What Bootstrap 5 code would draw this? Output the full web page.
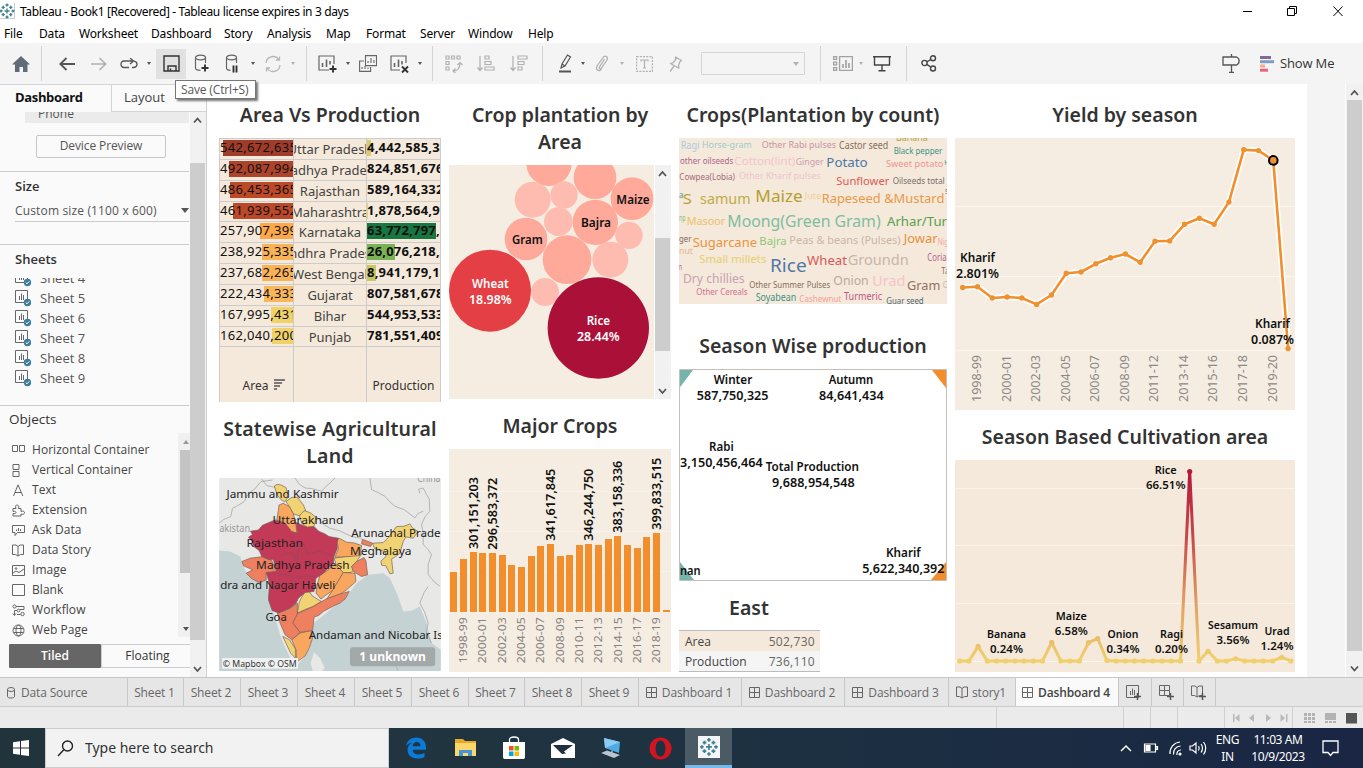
<!DOCTYPE html>
<html lang="en">
<head>
<meta charset="utf-8">
<title>Tableau - Book1</title>
<link href="https://cdn.jsdelivr.net/npm/bootstrap@5.3.0/dist/css/bootstrap.min.css" rel="stylesheet">
<style>
body{width:1363px;height:768px;overflow:hidden;background:#fff;font-family:"Open Sans","Noto Sans",sans-serif;font-size:12px;line-height:20px;color:#333}
svg{display:block;flex:none}
.ui{font-family:"Noto Sans","Open Sans",sans-serif}
.titlebar{height:22px;color:#000;font-size:12px;letter-spacing:-.36px}
.titlebar .name{margin-left:5px;padding-top:2px}
.menubar{height:21px;color:#000;line-height:24px;font-size:12px;letter-spacing:-.18px;padding-left:4px}
.menubar span{white-space:nowrap}
.toolbar{height:41px;background:#f4f4f4;position:relative}
.toolbar .slot{height:30px;display:flex;align-items:center;justify-content:center;flex:none}
.toolbar .line{width:1px;height:35px;background:#d4d4d4;flex:none}
.off{opacity:.42}
.cr{width:0;height:0;border:3px solid transparent;border-top:4px solid #555;border-bottom:0}
.toolbar .cr{border-width:3px 2.5px 0}
.combo{width:104px;height:23px;border:1px solid #d4d4d4;border-radius:1px;margin:0 15px 0 12px;padding-right:5px}
.tip{position:absolute;left:175px;top:37px;width:81px;height:19px;border:1px solid #767676;background:#fff;box-shadow:2px 2px 2px #777;font-size:12px;line-height:18px;padding-left:5px;color:#575757;white-space:nowrap;z-index:5;letter-spacing:-.15px}
.stage{height:593px}
.side{width:207px;background:#fafafa;border-top:1px solid #d4d4d4;border-right:1px solid #d0d0d0}
.side .tabs{height:27px;font-size:13px}
.side .t1{width:112px;border-right:1px solid #d4d4d4;padding-left:15px;font-weight:700;line-height:25px;color:#111;letter-spacing:-.35px}
.side .t2{flex:1;border-bottom:1px solid #d4d4d4;padding-left:12px;line-height:25px;color:#444}
.pane{width:190px;height:565px;overflow:hidden}
.phone{height:11px;margin-left:25px;background:#ebebeb;overflow:hidden;padding-left:13px;line-height:4px;color:#555;width:164px}
.preview{width:130px;height:23px;margin:12px 0 0 36px;border:1px solid #c6c6c6;border-radius:2px;text-align:center;line-height:20px;color:#555;letter-spacing:-.1px}
.rule{height:1px;background:#ccc;width:189px}
.head{font-weight:600;font-size:13px;color:#333}
.sized{margin:4px 0 0 15px;width:174px;height:22px;border-bottom:1px solid #ccc;color:#555;line-height:21px;letter-spacing:.15px}
.sheets{height:118px;margin-top:9px;padding-left:15px;overflow:hidden;color:#555;font-size:13px}
.sheets>div{height:20px;gap:9px}
.sheets>div:first-child{margin-top:-10px}
.objs{height:204px;margin-top:4px}
.objs .names{padding-left:12px;padding-top:7px;color:#444;font-size:12px;letter-spacing:.05px}
.objs .names>div{height:20px;gap:7px;white-space:nowrap}
.mini{width:12px;background:#f0f0f0;padding:7px 0 6px 2px}
.mini i{display:block;width:12px;height:123px;background:#c4c4c4}
.mode{margin:7px 0 0 9px;height:24px;line-height:22px;font-size:12px}
.mode .a{width:93px;background:#666;color:#fff;font-weight:600;text-align:center;line-height:24px;border-radius:1px}
.mode .b{width:90px;border:1px solid #ccc;border-right:0;text-align:center;padding-left:3px}
.vs{width:16px;background:#f1f1f1}
.vs .thumb{background:#cdcdcd}
.board{width:1100px;padding:17px 0 0 12px;gap:8px;overflow:hidden}
.board h2{margin:0;font-size:19.5px;line-height:27px;font-weight:600;text-align:center;color:#333;font-family:"Noto Sans","Open Sans",sans-serif;white-space:nowrap}
.c1,.c2{width:222px}.c3{width:268px}.c4{width:340px}
.grid3{height:264px;background:#f4e9da;border:1px solid #ccc;border-bottom:0;display:grid;grid-template-columns:74px 73px 73px;grid-template-rows:repeat(10,20.85px) 1fr}
.grid3>div{border-bottom:1px solid #ccc;border-right:1px solid #ccc;position:relative;overflow:hidden;white-space:nowrap;font-size:13px;font-family:"Noto Sans",sans-serif;line-height:19px}
.grid3>div:nth-child(n+31){border-bottom:0}
.grid3>div:nth-child(3n){border-right:0}
.grid3 b,.grid3 u{position:absolute;left:0;top:-1px;text-decoration:none;color:#111;letter-spacing:.3px}
.grid3 b{letter-spacing:.2px}
.grid3 i{position:absolute;top:1px;height:16px}
.grid3 i.r{right:0}.grid3 i.l{left:0}
.grid3 .mid{display:flex;justify-content:center;color:#444;line-height:20px}
.foot{display:flex;align-items:flex-end;justify-content:center;padding-bottom:7px;font-size:12px!important}
.east{width:141px;margin-top:9px;border-top:1px solid #bbb;border-bottom:1px solid #bbb;color:#444;font-size:12px}
.east div{height:20px;padding:0 5px 0 6px;line-height:21px}
.east span:last-child{color:#666;letter-spacing:.3px}
.east .e1{background:#f4e9da}.east .e2{background:#f5f5f5}
.gut{width:38px;background:#f4f4f4}
.sheetbar{height:30px;background:#e6e6e6;border-top:1px solid #c6c6c6;border-bottom:1px solid #ccc;display:grid;grid-template-columns:128px 56px 57px 57px 57px 57px 57px 56px 57px 57px 103px 103px 104px 67px 103px 33px 32px 32px 1fr;color:#666;font-size:12px}
.sheetbar>div{border-right:1px solid #c8c8c8;display:flex;align-items:center;justify-content:center;gap:4px;white-space:nowrap;letter-spacing:-.15px;padding:1px 2px 0 0}
.sheetbar .on{background:#fafafa;color:#444;font-weight:600}
.status{height:21px;background:#ebebeb;display:grid;grid-template-columns:997px 127px 27px 27px 47px 68px 1fr}
.status>div{border-right:1px solid #d0d0d0;display:flex;align-items:center}
.task{height:40px;background:linear-gradient(90deg,#21343c 0,#20353f 30%,#1c2f42 65%,#1a2644 100%);color:#fff}
.task .cell{display:flex;align-items:center;justify-content:center;height:40px;flex:none}
.find{width:344px;background:#f2f2f2;color:#333;font-size:14px;padding-left:11px;gap:11px;border:1px solid #ccc;letter-spacing:-.02px}
.app{width:49px}
.task .cur{background:#4b5b66;width:47px;border-bottom:3px solid #76b9ed}
.clock{font-size:12px;line-height:17px;text-align:center;white-space:nowrap;letter-spacing:-.4px}
.chart text{font-family:"Noto Sans","Open Sans",sans-serif}
</style>
</head>
<body class="d-flex flex-column">
<svg width="0" height="0" class="position-absolute">
<defs>
<g id="sheet" fill="none" stroke="#666"><path d="M.5.500h12v12H.5zM4.500 10V6M6.500 10V3.500M8.500 10V5"/></g>
<g id="sheetok"><use href="#sheet"/><circle cx="12.500" cy="12.500" r="3.700" fill="#3c7d9d"/><path d="M10.700 12.500l1.300 1.300 2.300-2.500" stroke="#fff" fill="none"/></g>
<g id="dash" fill="none" stroke="#666"><path d="M.5.500h10v10H.5zM5.500.500v10M.5 5.500h10"/></g>
<g id="book" fill="none" stroke="#666"><path d="M.5 1h3.500l2 1.500L8 1h3.500v9.500H8.500L6 12l-2.500-1.500H.5zM6 2.500V12"/></g>
<g id="logo" stroke="#3f8193" stroke-width="1.400"><path d="M8 5.500v5M5.500 8h5M8 .5v3M6.500 2h3M8 12.500v3M6.500 14h3M.5 8h3M2 6.500v3M12.500 8h3M14 6.500v3M4.200 2.800v3.200M2.600 4.400h3.200M11.800 2.800v3.200M10.200 4.400h3.200M4.200 10v3.200M2.600 11.600h3.200M11.800 10v3.200M10.200 11.600h3.200"/></g>
</defs>
</svg>

<header class="titlebar ui d-flex align-items-center">
  <svg width="15" height="16" viewBox="1 0 15 16"><path d="M15.500 0v15.500H0" fill="none" stroke="#ccc"/><use href="#logo"/></svg>
  <span class="name">Tableau - Book1 [Recovered] - Tableau license expires in 3 days</span>
  <svg class="ms-auto" width="120" height="20" viewBox="1243 1 120 20" fill="none" stroke="#000"><path d="M1242 11.500h10M1287.500 8.500h7v7h-7zM1289.500 8.500v-2h7v7h-2M1333.500 6.500l9 9.500M1342.500 6.500l-9 9.500"/></svg>
</header>
<nav class="menubar ui d-flex" id="menu"></nav>

<div class="toolbar d-flex align-items-center">
  <div class="slot" style="width:41px"><svg width="18" height="16"><path d="M9 0l9 8.500h-2.500V16H11v-5H7.500v5H3V8.500H0z" fill="#5f6c78"/></svg></div>
  <div class="line"></div>
  <div class="slot" style="width:32px;margin-left:9px"><svg width="16" height="14" fill="none" stroke="#555" stroke-width="1.800"><path d="M16 7H1M7.500 1L1.300 7l6.200 6"/></svg></div>
  <div class="slot off" style="width:32px"><svg width="16" height="14" fill="none" stroke="#555" stroke-width="1.600"><path d="M0 7h15M8.500 1l6.200 6-6.200 6"/></svg></div>
  <div class="slot" style="width:28px"><svg width="18" height="12" fill="none" stroke="#555" stroke-width="1.300"><path d="M9 9.500H4C0 9.500 0 3 4 3h9M10 0l3.500 3L10 6M14 3.200c4 .5 4 5.800 0 6.300h-2"/></svg></div>
  <div class="slot" style="width:12px"><i class="cr"></i></div>
  <div class="slot" style="width:30px;margin-left:1px;background:#e1e1e1"><svg width="17" height="17" fill="none" stroke="#333" stroke-width="1.400"><path d="M1 1h15v15H1zM5 16v-5h8v5M7.500 16v-2.500"/></svg></div>
  <div class="slot" style="width:32px"><svg width="16" height="19" fill="none" stroke="#666" stroke-width="1.200"><ellipse cx="6.500" cy="3.500" rx="5" ry="2.300"/><path d="M1.500 3.500V14c0 1.500 2 2.300 5 2.300M11.500 3.500V9"/><path d="M11 10.500v7M7.500 14h7" stroke="#333" stroke-width="1.900"/></svg></div>
  <div class="slot" style="width:28px"><svg width="14" height="19" fill="none" stroke="#666" stroke-width="1.200"><ellipse cx="6.500" cy="3.500" rx="5" ry="2.300"/><path d="M1.500 3.500V14c0 1.500 2 2.300 4 2.300M11.500 3.500V9"/><path d="M8.500 11.500v7M11.500 11.500v7" stroke="#333" stroke-width="1.900"/></svg></div>
  <div class="slot" style="width:14px"><i class="cr"></i></div>
  <div class="slot off" style="width:26px"><svg width="18" height="18" fill="none" stroke="#666" stroke-width="1.300"><path d="M2 8a7 7 0 0 1 13-3M16 10a7 7 0 0 1-13 3M15.500 1.500V5H12M2.500 16.500V13H6"/></svg></div>
  <div class="slot off" style="width:14px"><i class="cr"></i></div>
  <div class="line" style="margin:0 4px 0 6px"></div>
  <div class="slot" style="width:32px"><svg width="19" height="18" fill="none" stroke="#666" stroke-width="1.200"><path d="M16 9V1H1v14h10"/><path d="M4.500 12V8M8.500 12V4.500M12 9.500V6" stroke-width="1.600"/><path d="M15 10.500v7M11.500 14h7" stroke="#333" stroke-width="1.900"/></svg></div>
  <div class="slot" style="width:10px"><i class="cr"></i></div>
  <div class="slot" style="width:30px"><svg width="18" height="17" fill="none" stroke="#666" stroke-width="1.100"><path d="M6.500.600h11v10h-11zM5 6H.600v10.400h11V12M9 8V6M12 8V3M15 8V5M3 14v-2M6 14v-3M9 14v-1.500"/></svg></div>
  <div class="slot" style="width:32px"><svg width="19" height="18" fill="none" stroke="#666" stroke-width="1.200"><path d="M16 8V1H1v14h9"/><path d="M4.500 12V8M8.500 12V4.500M12 9.500V6" stroke-width="1.600"/><path d="M12 11.500l6 6M18 11.500l-6 6" stroke="#333" stroke-width="1.900"/></svg></div>
  <div class="slot" style="width:10px"><i class="cr"></i></div>
  <div class="line" style="margin:0 6px 0 7px"></div>
  <div class="slot off" style="width:30px"><svg width="18" height="18" fill="none" stroke="#555" stroke-width="1.200"><path d="M1 1h3v3H1zM6.500 1h3v3h-3zM12 1h3v3h-3zM1 6.500h3v3H1zM1 12h3v3H1zM8 16c5 0 7-3 7-8M12.500 10L15 7.500 17.500 10M10.500 13.500L8 16l2.500 2"/></svg></div>
  <div class="slot off" style="width:34px"><svg width="18" height="17" fill="none" stroke="#555" stroke-width="1.200"><path d="M3 1v14M.5 12.500L3 15.500l2.500-3M8 1h4v3H8zM8 6.500h6v3H8zM8 12h9v3H8z"/></svg></div>
  <div class="slot off" style="width:32px"><svg width="18" height="17" fill="none" stroke="#555" stroke-width="1.200"><path d="M3 1v14M.5 12.500L3 15.500l2.500-3M8 1h9v3H8zM8 6.500h6v3H8zM8 12h4v3H8z"/></svg></div>
  <div class="line" style="margin:0 8px 0 7px"></div>
  <div class="slot" style="width:28px"><svg width="14" height="19" fill="none" stroke="#555" stroke-width="1.200"><path d="M3 14l1-4L9.500 1l3 2L7 12zM4 10l3 2"/><path d="M1 17.500h12" stroke-width="2"/></svg></div>
  <div class="slot" style="width:8px"><i class="cr"></i></div>
  <div class="slot off" style="width:30px"><svg width="14" height="17" fill="none" stroke="#555" stroke-width="1.300"><path d="M9.500 4L4.500 12c-.7 1.500 1 2.500 2 1L12 5c1.500-3-2-5.500-4-2.500L2 11c-2 4 2.500 6 4.500 3"/></svg></div>
  <div class="slot off" style="width:10px"><i class="cr"></i></div>
  <div class="slot off" style="width:34px"><svg width="17" height="16" fill="none" stroke="#555" stroke-width="1.200"><path d="M.6.600h15.800v14.800H.600z" stroke-dasharray="2 1.200"/><path d="M5 5.500V4h7v1.500M8.500 4v8M7 12h3"/></svg></div>
  <div class="slot off" style="width:28px"><svg width="15" height="16" fill="none" stroke="#555" stroke-width="1.300" stroke-linejoin="round"><path d="M7.500 1l6 3.500-1.700 1.200-1.300 3.800.3 2.700L2.500 7.500l2.700-.8 2.500-3.200zM6 10l-4 5.500"/></svg></div>
  <div class="combo d-flex align-items-center justify-content-end"><i class="cr off" style="border-width:4px 3.500px 0"></i></div>
  <div class="line" style="margin-right:7px"></div>
  <div class="slot off" style="width:30px"><svg width="20" height="15" fill="none" stroke="#333" stroke-width="1.300"><path d="M6.600.700h12.800v13.600H6.600zM.6.700h3v2.600h-3zM.6 6.200h3v2.600h-3zM.6 11.700h3v2.600h-3z"/><path d="M10 12V8M13 12V4M16 12V7" stroke-width="1.700"/></svg></div>
  <div class="slot off" style="width:6px"><i class="cr"></i></div>
  <div class="slot" style="width:36px"><svg width="18" height="17" fill="none" stroke="#444" stroke-width="1.400"><path d="M0 1.700h18M1.500 2v8h15V2M9 10v5.500M5.500 15.800h7"/></svg></div>
  <div class="line" style="margin:0 7px 0 6px"></div>
  <div class="slot" style="width:30px"><svg width="16" height="17" fill="none" stroke="#444" stroke-width="1.400"><circle cx="3.500" cy="8" r="2.600"/><circle cx="12" cy="3.200" r="2.500"/><circle cx="12" cy="13.500" r="2.500"/><path d="M5.800 6.800l4-2.300M5.800 9.300l4 2.700"/></svg></div>
  <svg class="ms-auto" width="19" height="19" fill="none" stroke="#555" stroke-width="1.300"><path d="M1 3h13.500c3.500 1.500 3.500 6.500 0 8H1zM9.500 0v3M9.500 11v7M7 18.300h5"/></svg>
  <svg width="14" height="16" style="margin:0 6px 0 19px"><path d="M0 0h11v3H0z" fill="#85679a"/><path d="M0 4.200h14v3H0z" fill="#7d9cc4"/><path d="M0 8.500h5v3H0z" fill="#f3ab8b"/><path d="M0 12.700h8v3H0z" fill="#e8647c"/></svg>
  <span style="width:83px;font-size:13px;letter-spacing:-.15px;margin-top:-1px">Show Me</span>
  <div class="tip">Save (Ctrl+S)</div>
</div>

<main class="stage d-flex">
  <aside class="side">
    <div class="tabs d-flex"><div class="t1">Dashboard</div><div class="t2">Layout</div></div>
    <div class="d-flex">
      <div class="pane">
        <div class="phone">Phone</div>
        <div class="preview">Device Preview</div>
        <div class="rule" style="margin-top:13px"></div>
        <div class="head" style="margin:4px 0 0 15px">Size</div>
        <div class="sized d-flex align-items-center justify-content-between"><span>Custom size (1100 x 600)</span><i class="cr" style="border-width:5px 4px 0"></i></div>
        <div class="rule" style="margin-top:22px"></div>
        <div class="head" style="margin:4px 0 0 15px">Sheets</div>
        <div class="sheets" id="sheets"></div>
        <div class="rule" style="margin-top:9px"></div>
        <div style="margin:3px 0 0 9px;font-size:13.500px;">Objects</div>
        <div class="objs d-flex justify-content-between">
          <div class="names">
            <div class="d-flex align-items-center"><svg width="13" height="13" fill="none" stroke="#666"><path d="M.5 1.500h5v6h-5zM7.500 1.500h5v6h-5z"/></svg>Horizontal Container</div>
            <div class="d-flex align-items-center"><svg width="13" height="13" fill="none" stroke="#666"><path d="M1 .5h6v5H1zM1 7.500h6v5H1z"/></svg>Vertical Container</div>
            <div class="d-flex align-items-center"><svg width="13" height="13" fill="none" stroke="#666"><path d="M1.500 12L6 .8 10.800 12M3 8.500h6.300"/></svg>Text</div>
            <div class="d-flex align-items-center"><svg width="13" height="13" fill="none" stroke="#666"><path d="M1 4.500h3C3 2 4 1 5 1s2.500 1 1.500 3.500H9v3c2-1 3.500 0 3.500 1.200S11 11 9 10v2H1V9.500c2 .5 3-.2 3-1s-1-1.700-3-1z"/></svg>Extension</div>
            <div class="d-flex align-items-center"><svg width="13" height="13" fill="none" stroke="#666"><path d="M.5 1.500h12v7h-7L3 11.500v-3H.5zM4.500 7V5.500M6.500 7V4M8.500 7V5"/></svg>Ask Data</div>
            <div class="d-flex align-items-center"><svg width="13" height="13"><use href="#book"/></svg>Data Story</div>
            <div class="d-flex align-items-center"><svg width="13" height="13" fill="none" stroke="#666"><path d="M.5 1.500h12v10H.5zM1 9l3-2 3 1.500L12 5"/><circle cx="4" cy="4.500" r=".8"/></svg>Image</div>
            <div class="d-flex align-items-center"><svg width="13" height="13" fill="none" stroke="#666"><path d="M.5.500h12v11H.5z"/></svg>Blank</div>
            <div class="d-flex align-items-center"><svg width="13" height="13" fill="none" stroke="#666"><circle cx="2.500" cy="2.500" r="1.600"/><circle cx="10.500" cy="10" r="1.700"/><circle cx="6.500" cy="6.500" r="1.400"/><path d="M4 2.500h8v3H8M5 6.500H2.500V11M1 9.500l1.500 2L4 9.500M5 10.500h3.500"/></svg>Workflow</div>
            <div class="d-flex align-items-center"><svg width="13" height="13" fill="none" stroke="#666"><circle cx="6.500" cy="6.500" r="5.500"/><ellipse cx="6.500" cy="6.500" rx="2.500" ry="5.500"/><path d="M1.500 4.500h10M1.500 8.500h10"/></svg>Web Page</div>
          </div>
          <div class="mini d-flex flex-column justify-content-between"><div><span class="cr d-block" style="border-width:0 3px 4px;border-bottom:4px solid #999;margin-left:3px"></span><i style="margin-top:6px"></i></div><span class="cr" style="margin-left:3px;border-width:4px 3px 0"></span></div>
        </div>
        <div class="mode d-flex"><div class="a">Tiled</div><div class="b">Floating</div></div>
      </div>
      <div class="vs"><svg width="16" height="51" fill="none" stroke="#555" stroke-width="1.800"><path d="M4 10.500l3.500-4 3.500 4"/></svg><div class="thumb" style="height:477px;width:15px"></div><svg width="16" height="38" fill="none" stroke="#555" stroke-width="1.800"><path d="M4 27l3.500 4 3.500-4"/></svg></div>
    </div>
  </aside>

  <section class="board d-flex">
    <div class="c1">
      <h2 style="margin-bottom:10px">Area Vs Production</h2>
      <div class="grid3" id="states"></div>
      <h2 style="margin:13px -4px 9px;letter-spacing:.2px">Statewise Agricultural<br>Land</h2>
      <svg class="chart" width="222" height="193" viewBox="27 204 666 580">
        <path d="M27 204h666v580H27z" fill="#e8e8e7"/>
        <path d="M27 422l33 3 30 15 10 30 15 30 35 15 20-15 8 60 12 50 25 80 25 55 22 20 23-25 15-25 12-75 98-80 30-40 35-25 45-5 20 15 25 55 15 45 25-2 25-13 20 50 15 60 28 20v64H27z" fill="#c4d2d3"/>
        <path d="M312 728l18 17 14 30-8 9h-28l-6-24z" fill="#e8e8e7"/>
        <g fill="none" stroke="#a9a9a9" stroke-width="2.500" stroke-linejoin="round"><path d="M27 340l14-12 21-8 5-25 12-6 23-14 8-16 12-14 12-8 18-22 35-5M155 207l15 20 25 5M255 204l12 18 18 12 22 2 28 8 12-14 13-11 15-15M480 204l5 35 18 8 22 12 14 16 16 14 28 10 32 25 10-14 15-6M630 250l-4-12 14-4 10 20 8 12 2 38-14 16-11 24 5 24 0 36 14 14 11 16-10 30 0 30 18 22 17 13M655 530l-12 18-13 32 14 26 11 34-6 26 16 34M320 320l18 22 22 13 30 8 35 17 30 5M545 660l-5 30M560 770l3 12M270 320l-10 10"/></g>
        <g stroke="#6f5e55" stroke-width="2" stroke-linejoin="round">
          <g fill="#f1d374"><path d="M193 228l8-5 12 2 15 8 4 17-1 16-7 10-12-8-10-12-5-14z"/><path d="M228 275l17-13h17l18 23 8 20-18 13-20-6-12-22z"/><path d="M268 318l14-16 18 6 18 14-6 28-20 2-17-12z"/><path d="M372 445l48-7 35-6-15 23-15 15 5 12-7 6-23 0-20-20z"/><path d="M288 540l12 8 6 10 28 17-24 15-22 8-26 12 6-35z"/><path d="M218 680l20 10 18 28 0 27-14-14z"/><path d="M488 400l32-2 15-15 25-33 22-1 18-7 8 12 17 11-15 20-22-4-8 14-10 35-10 8-15 10 5 42-10 2-12-24-13-2-2-12 15-14-2-14-32-10z"/></g>
          <g fill="#f9a65f"><path d="M205 300l2-15 12-5 19 10 12 22 8 33 2 25-20-5-15-25-25-10z"/><path d="M380 385l12 2 18 10 22 2 23 8-5 30-30 3-45 2 10-25z"/><path d="M318 550l4-28 8-27 22-12 18-18 10 3 20 20-30 52-25 18-12 10z"/><path d="M400 488l35 2 3 25-28 25-22 15-38 13 20-30z"/><path d="M245 690l25-20 35-8 2 25-10 30-12 22-25 18-2-37z"/></g>
          <g fill="#ee8060"><path d="M95 455l25-10 40-5 25 12 15 33-32 5 0 20-20 9-25-14-15-15 20-10-28-12z"/><path d="M457 388l31 12-6 10-27-8z"/><path d="M425 470l15-15 22-12 6 10 5 42-18 5-25-15z"/><path d="M418 545l-12 22-16 13-18 8-32 17-14 12-14 5-4 40-38 6-22-28-4-20 16-8 46-20 42-24 40-15z"/><path d="M240 595l22-15 0 32-14 28 22 28-25 22-20-15-15-35-8-30z"/></g>
          <path d="M195 330l30 10 20 25 17 5-4-32 34 14 20-2 14 14 19 8 12 8 28 5-4 14 1 16-10 25-2 20-30 30-22 15-6 40-27 3-20 17-7 15-18 15-35 15-19-8-11-32 3-50-10-32 32-3-10-35-17-2-18-8-8-18-16-12-6-16-10-12 12-8-6-10 24-4 12-14z" fill="#c23a57"/>
        </g>
        <path d="M215 440l8-8 22-2 10 12 5 13 4-22 6-33 14 6 6 24 14 0 26-6 20 8 15 2M205 495l20-2 30 10 28-4 32 0" fill="none" stroke="#94495a" stroke-width="2.500"/>
        <g font-size="35" fill="#222" id="maplabels"></g>
        <rect x="36" y="745" width="228" height="32" fill="#f0f2f2"/><text x="38" y="771" font-size="27" fill="#333" textLength="222" lengthAdjust="spacingAndGlyphs">© Mapbox © OSM</text>
        <rect x="420" y="713" width="256" height="57" rx="9" fill="#a3a8a8"/><text x="448" y="754" font-size="36" font-weight="700" fill="#fff" textLength="200" lengthAdjust="spacingAndGlyphs">1 unknown</text>
      </svg>
    </div>

    <div class="c2">
      <h2 style="margin-bottom:10px">Crop plantation by<br>Area</h2>
      <div class="d-flex">
        <svg class="chart" width="206" height="234" viewBox="27 225 618 702">
          <path d="M27 225h615v702H27z" fill="#f5ede2"/>
          <g fill="#fea999"><circle cx="327" cy="220" r="68"/><circle cx="465" cy="263" r="64"/><circle cx="576" cy="326" r="64"/><circle cx="466" cy="397" r="68"/><circle cx="258" cy="447" r="64"/><circle cx="381" cy="509" r="73"/></g>
          <g fill="#febcb0"><circle cx="278" cy="329" r="54"/><circle cx="372" cy="315" r="41"/><circle cx="355" cy="395" r="43"/><circle cx="567" cy="436" r="41"/><circle cx="511" cy="509" r="54"/><circle cx="315" cy="606" r="42"/></g>
          <circle cx="150" cy="602" r="123" fill="#e33f44"/><circle cx="475" cy="714" r="152" fill="#ab1138"/>
          <g font-size="35" font-weight="600" fill="#111" id="bub"></g>
        </svg>
        <div class="vs"><svg width="16" height="73" fill="none" stroke="#555" stroke-width="1.800"><path d="M4 11l3.500-4 3.500 4"/></svg><div class="thumb" style="height:113px;width:15px"></div><svg width="16" height="48" fill="none" stroke="#555" stroke-width="1.800"><path d="M4 38l3.500 4 3.500-4"/></svg></div>
      </div>
      <h2 style="margin:13px 0 10px">Major Crops</h2>
      <svg class="chart" width="222" height="223" viewBox="27 147 666 669" id="major"></svg>
    </div>

    <div class="c3">
      <h2 style="margin-bottom:10px">Crops(Plantation by count)</h2>
      <svg class="chart" width="268" height="166" viewBox="27 144 804 498" id="cloud"></svg>
      <h2 style="margin:28px 0 10px">Season Wise production</h2>
      <svg class="chart" width="268" height="213" viewBox="27 147 804 639">
        <path d="M28.500 148.500h801v633h-801z" fill="#fff" stroke="#c4bfb8" stroke-width="3"/>
        <path d="M30 150h39l-39 52zM30 726v54h42z" fill="#76b5ac"/><path d="M786 150h42v54zM828 726v54h-45z" fill="#f28e2c"/>
        <g font-size="35" font-weight="600" fill="#111" id="season"></g>
      </svg>
      <h2 style="width:140px;margin:12px 0 0">East</h2>
      <div class="east"><div class="e1 d-flex justify-content-between"><span>Area</span><span>502,730</span></div><div class="e2 d-flex justify-content-between"><span>Production</span><span>736,110</span></div></div>
    </div>

    <div class="c4">
      <h2 style="margin-bottom:10px">Yield by season</h2>
      <svg class="chart" width="340" height="272" viewBox="955 138 340 272" id="yield"></svg>
      <h2 style="margin:13px 0 10px">Season Based Cultivation area</h2>
      <svg class="chart" width="340" height="212" viewBox="955 460 340 212" id="cult"></svg>
    </div>
  </section>
  <div class="gut"></div>
  <div class="vs" style="width:18px;border-left:1px solid #fff"><svg width="17" height="16" fill="none" stroke="#555" stroke-width="1.800"><path d="M5 11l3.500-4 3.500 4"/></svg><div class="thumb" style="height:551px;margin-left:1px;width:15px"></div><svg width="17" height="26" fill="none" stroke="#555" stroke-width="1.800"><path d="M5 15.500l3.500 4 3.500-4"/></svg></div>
</main>

<nav class="sheetbar" id="sheetbar"></nav>
<div class="status"><div></div><div></div><div></div><div></div><div></div>
  <div><svg width="67" height="12" viewBox="1225 0 67 12" fill="#b9b9b9"><path d="M1233 2h1.500v8h-1.500zM1239.500 2v8l-4.500-4zM1254 2v8l-5-4zM1266 2v8l5-4zM1280.500 2v8l4.500-4zM1286 2h1.500v8h-1.500z"/></svg></div>
  <div><svg width="70" height="12" viewBox="1293 0 70 12" fill="#b3b3b3"><path d="M1304 1h3v3h-3zM1308 1h3v3h-3zM1312 1h3v3h-3zM1304 5h3v3h-3zM1308 5h3v3h-3zM1312 5h3v3h-3zM1304 9h3v2h-3zM1308 9h3v2h-3zM1312 9h3v2h-3zM1325 1h11v7h-11zM1325 9h3v2h-3zM1329 9h3v2h-3zM1333 9h3v2h-3z"/><path d="M1346 1h11v10.500h-11z" fill="#555"/></svg></div>
</div>

<footer class="task ui d-flex">
  <div class="cell" style="width:45px;padding-right:4px"><svg width="16" height="16" fill="#fff"><path d="M0 2.200L7 1.200v6.300H0zM8 1l8-1v7.500H8zM0 8.500h7v6.300l-7-1zM8 8.500h8V16l-8-1z"/></svg></div>
  <div class="find d-flex align-items-center"><svg width="17" height="17" fill="none" stroke="#222" stroke-width="1.400"><circle cx="10.500" cy="6" r="5"/><path d="M7 9.500L1 16"/></svg><span>Type here to search</span></div>
  <div class="cell" style="width:51px;margin-left:1px"><svg width="22" height="22" viewBox="0 0 22 22"><path d="M1 9.500C2 3.500 6 .5 11.500.500 17.500.500 21 5 21 10v2.800H7.500c.3 3 2.700 4.700 6 4.700 2.500 0 4.500-.7 6-1.700v4.200c-2 1-4.300 1.500-7 1.500C6 21.500 2.500 17.500 2.500 13c0-3 1.500-5.500 4.500-7.200C4.500 6 2.500 7 1 9.500zM7.600 9.300h7.900C15.500 6.500 14 5 11.600 5 9.500 5 8 6.800 7.600 9.300z" fill="#0a7bd8"/></svg></div>
  <div class="cell app"><svg width="22" height="18"><path d="M0 0h8l2 2h11v15H0z" fill="#e9a92c"/><path d="M0 4h21v13H0z" fill="#fbd66c"/><path d="M4 17v-6h13v6h-4v-3H8v3z" fill="#4595d6"/></svg></div>
  <div class="cell" style="width:48px"><svg width="22" height="24"><path d="M6.500 7V3.500C6.500 2 8 1 11 1s4.500 1 4.500 2.500V7" fill="none" stroke="#fff" stroke-width="1.300"/><path d="M0 6h22v15c0 1.500-1 2-2 2H2c-1 0-2-.5-2-2z" fill="#fff"/><path d="M6 10h4.500v4.500H6z" fill="#f25022"/><path d="M11.500 10H16v4.500h-4.500z" fill="#7fba00"/><path d="M6 15.500h4.500V20H6z" fill="#00a4ef"/><path d="M11.500 15.500H16V20h-4.500z" fill="#ffb900"/></svg></div>
  <div class="cell app"><svg width="24" height="21"><path d="M0 6l12-6 12 6v14H0z" fill="#fff"/><path d="M2 7h20l-9 6.500 2 2L11 16z" fill="#1d3240"/></svg></div>
  <div class="cell app"><svg width="24" height="22"><path d="M4 1l16 4-1 11L5 11z" fill="#4fabe4"/><path d="M4 1l16 4L5 11z" fill="#8accf3"/><path d="M11 13l2 1v3h-2z" fill="#8a97a0"/><path d="M1 16l6-2.500L20 18l-6 3z" fill="#b9c6cf"/></svg></div>
  <div class="cell app"><svg width="23" height="23"><ellipse cx="11.500" cy="11.500" rx="11" ry="11" fill="#cf1422"/><ellipse cx="11.500" cy="11.500" rx="5" ry="8" fill="#1d3240"/></svg></div>
  <div class="cell cur"><svg width="24" height="24"><path d="M1 1h22v22H1z" fill="#f4f6f7"/><use href="#logo" transform="translate(2.500 2.500) scale(1.180)"/></svg></div>
  <div class="cell ms-auto"><svg width="92" height="20" viewBox="1120 0 92 20" fill="none" stroke="#fff" stroke-width="1.200"><path d="M1121 13l5-5 5 5" stroke-width="1.500"/><path d="M1144.500 6h11v8h-11zM1156 8.500h1.500v3h-1.500z"/><path d="M1146 7.500h4v5h-4z" fill="#fff"/><path d="M1170 16A11 11 0 0 1 1180 4M1173.500 16.500a7.500 7.500 0 0 1 7-8.500M1177 17a4 4 0 0 1 4-5" /><circle cx="1180" cy="16" r="1" fill="#fff"/><path d="M1190 8h2.500L1196 5v10l-3.500-3h-2.500zM1198.500 8q1.500 2 0 4.500M1201 6q3 4 0 8.500M1203.500 4q4.500 6 0 12.500"/></svg></div>
  <div class="cell clock" style="width:31px">ENG<br>IN</div>
  <div class="cell clock" style="width:70px">11:03 AM<br>10/9/2023</div>
  <div class="cell" style="width:50px;padding-right:16px"><svg width="17" height="17" fill="none" stroke="#fff" stroke-width="1.300"><path d="M1 1h15v11.500h-5L8.500 15.500 6 12.500H1z"/></svg></div>
</footer>

<script>
const el = id => document.getElementById(id);
// fitted label: x, baseline y, string, drawn length, anchor, extra attributes
const txt = (x, y, s, len, anchor = 'start', extra = '') =>
  `<text x="${x}" y="${y}" text-anchor="${anchor}" textLength="${len}" lengthAdjust="spacingAndGlyphs" ${extra}>${s}</text>`;
const up = (x, y, s, len, extra = '') =>
  `<text transform="translate(${x} ${y}) rotate(-90)" textLength="${len}" lengthAdjust="spacingAndGlyphs" ${extra}>${s}</text>`;

// menu: label and width of its slot
el('menu').innerHTML = [['File',35],['Data',40],['Worksheet',72],['Dashboard',73],['Story',43],['Analysis',59],['Map',40],['Format',54],['Server',48],['Window',60],['Help',40]]
  .map(m => `<span style="width:${m[1]}px">${m[0]}</span>`).join('');

el('sheets').innerHTML = [4,5,6,7,8,9].map(n =>
  `<div class="d-flex align-items-center"><svg width="16" height="17"><use href="#sheetok"/></svg>Sheet ${n}</div>`).join('');

// state table: area, bar px, bar colour, state, production, bar px, bar colour
const rows = [
 ['542,672,635',70,'#a03c29','Uttar Pradesh','4,442,585,35',4,'#d9cd68'],
 ['492,087,994',64,'#ad432a','Madhya Pradesh','824,851,676',0,''],
 ['486,453,365',63,'#be4927','Rajasthan','589,164,332',0,''],
 ['461,939,552',60,'#bb4829','Maharashtra','1,878,564,91',1,'#e5d56c'],
 ['257,907,399',33,'#fba74a','Karnataka','63,772,797,8',69,'#187640'],
 ['238,925,335',31,'#fab257','Andhra Pradesh','26,076,218,5',28,'#79b356'],
 ['237,682,265',31,'#fab257','West Bengal','8,941,179,18',9,'#c5c863'],
 ['222,434,333',29,'#f9b65b','Gujarat','807,581,678',0,''],
 ['167,995,431',22,'#f0d269','Bihar','544,953,533',0,''],
 ['162,040,200',21,'#f0d269','Punjab','781,551,409',0,'']];
el('states').innerHTML = rows.map(r =>
  `<div><i class="r" style="width:${r[1]}px;background:${r[2]}"></i><u>${r[0]}</u></div><div class="mid"><span>${r[3]}</span></div><div><i class="l" style="width:${r[5]}px;background:${r[6]}"></i><b>${r[4]}</b></div>`).join('') +
  `<div class="foot ps-3"><span>Area</span><svg width="12" height="11" style="margin:0 0 5px 6px" stroke="#555" stroke-width="1.500"><path d="M0 1h11M0 4h8M0 7h6M0 10h3"/></svg></div><div></div><div class="foot">Production</div>`;

el('maplabels').innerHTML =
  txt(49,263,'Jammu and Kashmir',337) + txt(187,341,'Uttarakhand',213) + txt(109,410,'Rajasthan',170) +
  txt(138,476,'Madhya Pradesh',281) + txt(30,539,'dra and Nagar Haveli',346) + txt(166,635,'Goa',64) +
  txt(424,380,'Arunachal Prade',268) + txt(420,434,'Meghalaya',185) + txt(296,687,'Andaman and Nicobar Is',403) +
  txt(27,367,'akistan',93,'start','fill="#999" font-size="30"') + txt(622,215,'China',70,'start','fill="#999" font-size="30"');

el('bub').innerHTML = txt(579,342,'Maize',100,'middle') + txt(468,411,'Bajra',90,'middle') + txt(262,462,'Gram',92,'middle') +
  '<g fill="#fff">' + txt(151,594,'Wheat',110,'middle') + txt(151,641,'18.98%',128,'middle') + txt(475,705,'Rice',70,'middle') + txt(475,752,'28.44%',128,'middle') + '</g>';

// Major Crops
{
  const xs = [30,60,90,117,147,177,204,234,264,291,321,351,378,408,435,465,495,522,552,582,609,639,669];
  const tops = [516,477,456,459,459,465,495,501,468,438,432,468,465,435,432,435,417,408,435,444,411,399,630];
  let s = '<path d="M27 147h666v669H27z" fill="#f5ede2"/><path d="M27 274h666M27 394h666M27 515h666M27 637h666" stroke="#f8f3ec" stroke-width="3"/>';
  s += xs.map((x, i) => `<rect x="${x}" y="${tops[i]}" width="21" height="${636 - tops[i]}" fill="#f28e2c"/>`).join('');
  s += [[114,447,'301,151,203'],[171,449,'296,583,372'],[345,422,'341,617,845'],[459,422,'346,244,750'],[546,398,'383,158,336'],[663,389,'399,833,515']]
    .map(v => up(v[0], v[1], v[2], 216, 'font-size="35" font-weight="600" fill="#111"')).join('');
  s += ['1998-99','2000-01','2002-03','2004-05','2006-07','2008-09','2010-11','2012-13','2014-15','2016-17','2018-19']
    .map((t, i) => up(81 + i * 58, 790, t, 138, 'font-size="35" fill="#858280"')).join('');
  el('major').innerHTML = s;
}

// word cloud: x, baseline, word, length, size, colour
el('cloud').innerHTML = '<path d="M27 144h804v498H27z" fill="#f4e9da"/>' + [
 [32,177,'Ragi',56,30,'#a9cbe0'],[96,173,'Horse-gram',149,28,'#9dc9cf'],[275,173,'Other Rabi pulses',223,28,'#c793a8'],[507,177,'Castor seed',148,30,'#8a6c5c'],[678,152,'Banana',95,26,'#b5a034'],
 [671,192,'Black pepper',146,24,'#3f9286'],[30,221,'other oilseeds',160,24,'#b0658c'],[193,224,'Cotton(lint)',183,33,'#f7c3cb'],[377,224,'Ginger',84,27,'#cf9bb2'],[469,231,'Potato',124,38,'#4b78a6'],
 [648,230,'Sweet potato',172,28,'#ef9590'],[823,224,'H',14,20,'#499894'],[28,271,'Cowpea(Lobia)',167,24,'#a66a7e'],[207,266,'Other Kharif pulses',245,28,'#f0c3cf'],[499,284,'Sunflower',159,34,'#de5a58'],[668,281,'Oilseeds total',156,24,'#78706b'],
 [27,324,'a',13,24,'#499894'],[38,341,'S',27,42,'#b5a034'],[90,341,'samum',152,42,'#c0ac47'],[256,337,'Maize',142,49,'#b5a034'],[404,326,'Jute',50,24,'#f5cf98'],[455,340,'Rapeseed &amp;Mustard',368,38,'#ea9945'],[825,312,'S',10,22,'#777'],
 [27,392,'np',20,26,'#8cc07c'],[50,404,'Masoor',116,33,'#ecc06a'],[172,410,'Moong(Green Gram)',460,46,'#80bda2'],[651,408,'Arhar/Tur',180,40,'#59a14f'],
 [27,455,'ger',37,26,'#7f675f'],[68,471,'Sugarcane',193,38,'#eb943d'],[268,464,'Bajra',82,34,'#8cc978'],[358,462,'Peas &amp; beans (Pulses)',334,34,'#cbb5a8'],[701,459,'Jowar',102,36,'#e8913d'],[803,465,'Nig',32,24,'#f3aaa5'],
 [27,493,'nut',42,26,'#e3b995'],[88,518,'Small millets',201,33,'#e9cd6d'],[300,545,'Rice',110,54,'#4e79a7'],[411,525,'Wheat',120,38,'#d9565b'],[533,525,'Groundn',183,42,'#c9b5ab'],[772,512,'Coria',58,30,'#bf638c'],
 [27,540,'n',9,24,'#b0658c'],[814,551,'Ta',24,24,'#8a7468'],[39,579,'Dry chillies',185,36,'#caa0b4'],[238,594,'Other Summer Pulses',243,24,'#8a6c5c'],[490,585,'Onion',106,36,'#bcaaa0'],[607,589,'Urad',99,44,'#f6c3ca'],[711,600,'Gram',100,40,'#94705e'],[818,595,'G',16,28,'#c9b5ab'],
 [79,616,'Other Cereals',154,24,'#d37295'],[257,632,'Soyabean',122,30,'#3f9286'],[388,635,'Cashewnut',126,24,'#fa9f9c'],[522,630,'Turmeric',114,30,'#c3568a'],[649,643,'Guar seed',112,24,'#4b6878']]
 .map(w => txt(w[0], w[1], w[2], w[3], 'start', `font-size="${w[4]}" fill="${w[5]}"`)).join('');

el('season').innerHTML = [[189,193,'Winter',116],[188,240,'587,750,325',215],[543,193,'Autumn',134],[544,240,'84,641,434',194],[154,393,'Rabi',74],[154,441,'3,150,456,464',248],[427,453,'Total Production',280],[430,501,'9,688,954,548',248],[700,711,'Kharif',104],[700,759,'5,622,340,392',247],[61,766,'nan',62]]
 .map(t => txt(t[0], t[1], t[2], t[3], 'middle')).join('');

// Yield by season
{
  const ys = [287.5,286.8,298,297,298,304.4,295,273.2,272,263.8,257.8,254,262.3,241.2,240.9,224.3,218.3,224.3,202.1,149.8,150.6,160.4,348.5];
  const p = ys.map((y, i) => [962.7 + i * 14.79, y]);
  const line = p.map(a => a.join()).join(' ');
  let s = '<path d="M955 138h340v272H955z" fill="#f5ede2"/><path d="M955 206.500h340M955 276.500h340M955 350.500h340" stroke="#fbf6ef"/>';
  s += `<polyline points="${line}" fill="none" stroke="#fff" stroke-width="6" stroke-linejoin="round"/><polyline points="${line}" fill="none" stroke="#f28e2c" stroke-width="2.600" stroke-linejoin="round"/>`;
  s += p.map(a => `<circle cx="${a[0]}" cy="${a[1]}" r="2.700" fill="#ee922f"/>`).join('');
  s += '<circle cx="1273.300" cy="160.400" r="4.300" fill="#ee922f" stroke="#000" stroke-width="2"/>';
  const b = 'font-size="11.700" font-weight="600" fill="#111"';
  s += txt(977.5,262,'Kharif',35,'middle',b) + txt(977.5,278,'2.801%',43,'middle',b) + txt(1272.5,328,'Kharif',35,'middle',b) + txt(1272.5,344,'0.087%',43,'middle',b);
  s += ['1998-99','2000-01','2002-03','2004-05','2006-07','2008-09','2011-12','2013-14','2015-16','2017-18','2019-20']
    .map((t, i) => up(981 + i * 29.55, 402, t, 47, 'font-size="12" fill="#8c8986"')).join('');
  el('yield').innerHTML = s;
}

// Season based cultivation area
{
  const ys = Array(37).fill(661);
  Object.assign(ys, {2:646.4,10:642.3,14:642.6,15:638.5,16:660.5,25:471.5,27:651.3,30:658.8,35:657.3});
  const p = ys.map((y, i) => [959.7 + i * 9.2, y]);
  let s = '<defs><linearGradient id="heat" gradientUnits="userSpaceOnUse" x1="0" y1="471" x2="0" y2="661"><stop offset="0" stop-color="#b4183b"/><stop offset=".35" stop-color="#c8484a"/><stop offset=".7" stop-color="#e2a065"/><stop offset="1" stop-color="#f0d06c"/></linearGradient></defs>';
  s += '<path d="M955 460h340v212H955z" fill="#f4e9da"/><path d="M955 488.500h340M955 545.500h340M955 603.500h340M955 661.500h340" stroke="#faf4ea"/>';
  s += `<polyline points="${p.map(a => a.join()).join(' ')}" fill="none" stroke="url(#heat)" stroke-width="3" stroke-linejoin="round"/>`;
  s += p.map(a => `<circle cx="${a[0]}" cy="${a[1]}" r="2.600" fill="url(#heat)"/>`).join('');
  const b = 'font-size="11.300" font-weight="600" fill="#111"';
  s += [['Banana','0.24%',1006.500,638,39],['Maize','6.58%',1071.300,620,31],['Onion','0.34%',1123,638,31],['Ragi','0.20%',1171.500,638,23],['Rice','66.51%',1165.700,474,22],['Sesamum','3.56%',1233,629,50],['Urad','1.24%',1277,635,25]]
    .map(t => txt(t[2],t[3],t[0],t[4],'middle',b) + txt(t[2],t[3]+15,t[1],t[1].length*6.6,'middle',b)).join('');
  el('cult').innerHTML = s;
}

// sheet tabs
{
  const d = '<svg width="12" height="12"><use href="#dash"/></svg>';
  const plus = '<path d="M11.500 8v7M8 11.500h7" stroke="#555" stroke-width="1.500"/>';
  let s = '<div style="justify-content:flex-start;padding-left:7px;gap:6px"><svg width="8" height="12" fill="none" stroke="#666"><ellipse cx="4" cy="2.500" rx="3.500" ry="2"/><path d="M.5 2.500v7c0 2 7 2 7 0v-7"/></svg>Data Source</div>';
  for (let i = 1; i < 10; i++) s += `<div>Sheet ${i}</div>`;
  for (let i = 1; i < 4; i++) s += `<div>${d}Dashboard ${i}</div>`;
  s += `<div><svg width="12" height="13"><use href="#book"/></svg>story1</div><div class="on">${d}Dashboard 4</div>`;
  s += ['sheet','dash','book'].map(n => `<div><svg width="16" height="16"><use href="#${n}"/>${plus}</svg></div>`).join('');
  el('sheetbar').innerHTML = s;
}
</script>
<script src="https://cdn.jsdelivr.net/npm/bootstrap@5.3.0/dist/js/bootstrap.bundle.min.js"></script>
</body>
</html>
